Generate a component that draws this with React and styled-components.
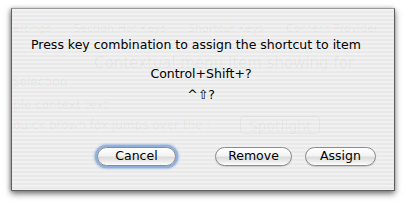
import React from "react";
import styled, { createGlobalStyle } from "styled-components";

const Global = createGlobalStyle`
  html, body { margin: 0; padding: 0; background: #ffffff; }
  body { width: 409px; height: 205px; overflow: hidden; font-family: "DejaVu Sans", "Liberation Sans", sans-serif; }
`;

const Page = styled.div`
  width: 409px;
  height: 205px;
  box-sizing: border-box;
  padding: 8px 14px 14px 11px;
`;

const Sheet = styled.div`
  display: grid;
  width: 384px;
  height: 183px;
  box-sizing: border-box;
  border: 1px solid #5e5e5e;
  border-top-color: #9a9a9a;
  background: repeating-linear-gradient(180deg, #f1f1f1 0px, #f1f1f1 2px, #e9e9e9 2px, #e9e9e9 4px);
  box-shadow: 0 3px 6px rgba(0, 0, 0, 0.5), -1px 0 4px rgba(0, 0, 0, 0.22);
  overflow: hidden;
`;

const Layer = styled.div`
  grid-area: 1 / 1;
  display: flex;
  flex-direction: column;
  min-width: 0;
`;

const Ghost = styled.div`
  font-size: ${(p) => p.$size || 12}px;
  color: rgba(0, 0, 0, 0.045);
  white-space: nowrap;
  height: ${(p) => p.$h}px;
  line-height: ${(p) => p.$h}px;
  padding-left: ${(p) => p.$left || 0}px;
  display: flex;
  gap: ${(p) => p.$gap || 0}px;
`;

const GhostField = styled.span`
  margin-left: 30px;
  padding: 0 8px;
  border: 1px solid rgba(0, 0, 0, 0.035);
  border-radius: 3px;
  font-size: 14px;
`;

const Message = styled.div`
  font-size: 12.5px;
  color: #000;
  padding: 27px 0 0 19px;
  height: 17px;
  line-height: 17px;
  white-space: nowrap;
`;

const Centered = styled.div`
  font-size: 12.5px;
  color: #000;
  text-align: center;
  height: 17px;
  line-height: 17px;
  margin-top: ${(p) => p.$top}px;
  padding-right: ${(p) => p.$shift || 0}px;
`;

const Buttons = styled.div`
  display: flex;
  align-items: center;
  margin-top: 44px;
  padding-left: 85px;
`;

const Button = styled.div`
  width: ${(p) => p.$w}px;
  height: 19px;
  box-sizing: border-box;
  margin-left: ${(p) => p.$gap || 0}px;
  border: 1px solid #8a8a8a;
  border-radius: 10px;
  background: linear-gradient(180deg, #ffffff 0%, #f4f4f4 45%, #dcdcdc 55%, #f0f0f0 85%, #ffffff 100%);
  box-shadow: ${(p) => (p.$focus ? "0 0 0 2px #8fb1dc, 0 0 2px 3px rgba(110,150,210,0.5)" : "0 1px 1px rgba(0,0,0,0.15)")};
  font-size: 12.5px;
  color: #000;
  display: flex;
  align-items: center;
  justify-content: center;
  line-height: 1;
`;

export default function App() {
  return (
    <>
      <Global />
      <Page>
        <Sheet>
          <Layer aria-hidden="true">
            <Ghost $h={14} $size={11} $left={1} $gap={22} style={{ marginTop: 13 }}>
              <span>ettings</span>
              <span>Section Hot Keys</span>
              <span>Shortcut Keys</span>
              <span>Content Provider</span>
            </Ghost>
            <Ghost $h={18} $size={15} $left={82} style={{ marginTop: 18 }}>
              Contextual menu item showing for
            </Ghost>
            <Ghost $h={16} $left={0} style={{ marginTop: 2 }}>Selection</Ghost>
            <Ghost $h={16} $left={1} style={{ marginTop: 7 }}>ple context text:</Ghost>
            <Ghost $h={18} $left={1} style={{ marginTop: 3 }}>
              quick brown fox jumps over the l<GhostField>Spotlight</GhostField>
            </Ghost>
          </Layer>
          <Layer>
            <Message>Press key combination to assign the shortcut to item</Message>
            <Centered $top={12} $shift={4}>Control+Shift+?</Centered>
            <Centered $top={4} $shift={4}>^⇧?</Centered>
            <Buttons>
              <Button $w={79} $focus>Cancel</Button>
              <Button $w={77} $gap={39}>Remove</Button>
              <Button $w={71} $gap={13}>Assign</Button>
            </Buttons>
          </Layer>
        </Sheet>
      </Page>
    </>
  );
}
